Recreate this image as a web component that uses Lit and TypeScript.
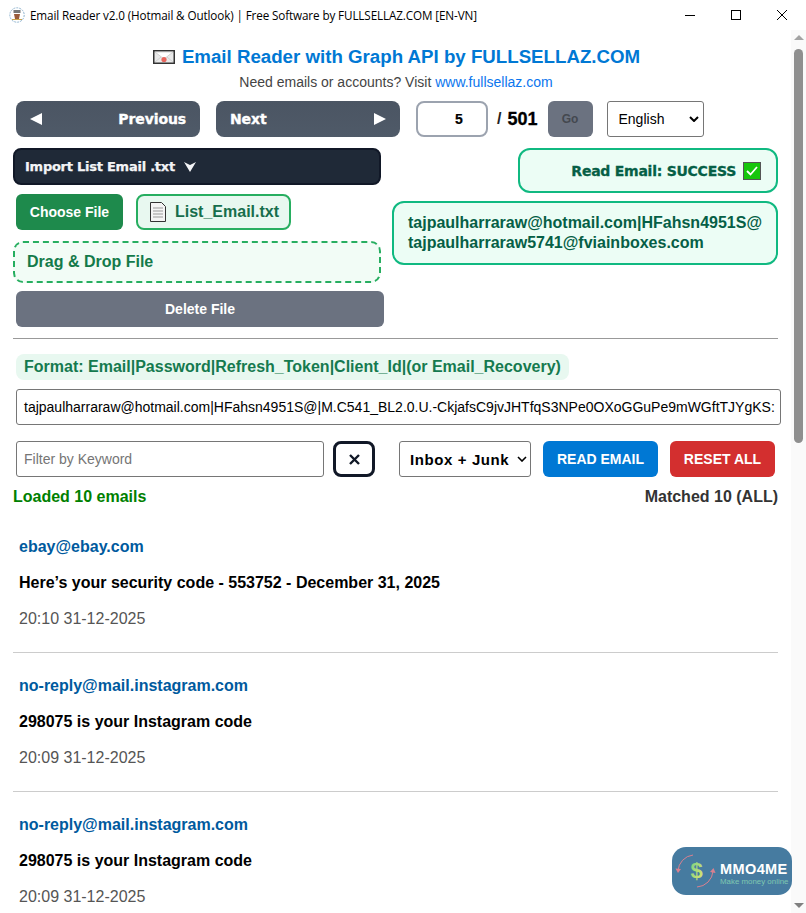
import { LitElement, html, css } from "lit";
import { customElement } from "lit/decorators.js";

const emails = [
  ["ebay@ebay.com", "Here’s your security code - 553752 - December 31, 2025", "20:10 31-12-2025"],
  ["no-reply@mail.instagram.com", "298075 is your Instagram code", "20:09 31-12-2025"],
  ["no-reply@mail.instagram.com", "298075 is your Instagram code", "20:09 31-12-2025"],
];

const star = "M0-2.6L.7-.8 2.6-.8 1.1.4 1.6 2.3 0 1.2-1.6 2.3-1.1.4-2.6-.8-.7-.8z";
const starPos = [[29, 7], [36, 11], [40, 17], [9, 30], [13, 37], [20, 40]];

@customElement("app-root")
export class AppRoot extends LitElement {
  static styles = css`
    :host { display: block; width: 806px; height: 913px; overflow: hidden; position: relative; background: #fff; font-family: "Liberation Sans", Arial, sans-serif; color: #000; }
    * { box-sizing: border-box; }
    .titlebar { height: 30px; display: flex; align-items: center; background: #fff; }
    .favicon { margin-left: 9px; width: 16px; height: 16px; }
    .wintitle { margin-left: 5px; font: 11.7px "Open Sans", "Noto Sans", sans-serif; color: #000; white-space: nowrap; flex: 1; letter-spacing: -0.12px; }
    .winbtns { display: flex; margin-right: 1px; }
    .winbtn { width: 46px; height: 30px; display: flex; align-items: center; justify-content: center; }
    .body { display: flex; height: 883px; }
    .page { width: 791px; height: 883px; overflow: hidden; flex: none; }
    .sb { width: 15px; flex: none; background: #fafafa; display: flex; flex-direction: column; align-items: center; padding-top: 5px; }
    .sb-up { width: 0; height: 0; border-left: 5px solid transparent; border-right: 5px solid transparent; border-bottom: 5px solid #a3a3a3; flex: none; }
    .sb-thumb { width: 9px; height: 394px; background: #8f8f8f; border-radius: 5px; margin-top: 9px; flex: none; }
    .sb-space { flex: 1; }
    .sb-down { width: 0; height: 0; border-left: 5px solid transparent; border-right: 5px solid transparent; border-top: 5px solid #808080; flex: none; margin-bottom: 5px; }
    h1 { margin: 0; height: 24px; margin-top: 15px; font-size: 18.7px; line-height: 24px; font-weight: 700; color: #0078d4; display: flex; justify-content: center; align-items: center; gap: 7px; padding-left: 2px; }
    .sub { text-align: center; font-size: 14px; line-height: 16px; margin-top: 5px; color: #444; padding-left: 1px; }
    .sub a { color: #0b76ee; text-decoration: none; }
    .nav { display: flex; align-items: center; margin: 11px 0 0 16px; height: 36px; }
    .navbtn { width: 184px; height: 36px; border-radius: 8px; background: linear-gradient(#4b5563, #4f5a68); color: #fff; display: flex; align-items: center; justify-content: space-between; padding: 0 14px; font: 700 14px "DejaVu Sans", sans-serif; -webkit-text-stroke: 0.35px #fff; letter-spacing: -0.1px; margin-right: 16px; }
    .navbtn svg { display: block; }
    .pageinp { width: 72px; height: 36px; border: 2px solid #9ca3af; border-radius: 8px; text-align: center; padding-left: 14px; font-size: 14px; font-weight: 700; line-height: 32px; background: #fff; -webkit-text-stroke: 0.2px #000; }
    .slash { font-size: 16px; font-weight: 700; margin-left: 9px; color: #222; }
    .total { font-size: 18px; font-weight: 700; margin-left: 6px; -webkit-text-stroke: 0.3px #000; }
    .go { width: 45px; height: 36px; margin-left: 10px; background: #6b7280; color: #44484f; border-radius: 6px; font-size: 12px; font-weight: 700; display: flex; align-items: center; justify-content: center; }
    .lang { width: 97px; height: 36px; margin-left: 14px; border: 1px solid #767676; border-radius: 3px; background: #fff; font-size: 14px; display: flex; align-items: center; justify-content: space-between; padding: 0 4px 0 11px; }
    .cols { display: flex; margin: 11px 0 0 13px; }
    .left { width: 371px; flex: none; display: flex; flex-direction: column; }
    .right { margin-left: 8px; width: 386px; flex: none; display: flex; flex-direction: column; align-items: flex-end; }
    .import { width: 368px; height: 37px; border: 2px solid #111827; border-radius: 8px; background: #1f2937; color: #f3f4f6; font: 700 13px "DejaVu Sans", sans-serif; -webkit-text-stroke: 0.25px #f3f4f6; letter-spacing: -0.25px; display: flex; align-items: center; padding-left: 10px; gap: 9px; }
    .filerow { display: flex; margin: 9px 0 0 3px; gap: 13px; }
    .choose { width: 107px; height: 36px; border-radius: 6px; background: #1e8a4c; color: #fff; font-size: 14px; font-weight: 700; display: flex; align-items: center; justify-content: center; }
    .chip { width: 155px; height: 36px; border-radius: 8px; border: 2px solid #27ae60; background: #e8f8f0; color: #166e4c; font-size: 16px; font-weight: 700; display: flex; align-items: center; padding-left: 12px; gap: 9px; }
    .drag { width: 368px; height: 42px; margin-top: 11px; border: 2px dashed #27ae60; border-radius: 10px; background: #f2fcf6; color: #147a4a; font-size: 16px; font-weight: 700; display: flex; align-items: center; padding-left: 12px; }
    .del { width: 368px; height: 36px; margin: 8px 0 0 3px; background: #6b7280; color: #fff; border-radius: 6px; font-size: 14px; font-weight: 700; display: flex; align-items: center; justify-content: center; }
    .status { width: 260px; height: 45px; border: 2px solid #10b981; border-radius: 12px; background: #ecfdf5; color: #065f46; font: 700 14px "DejaVu Sans", sans-serif; -webkit-text-stroke: 0.3px #065f46; letter-spacing: -0.25px; display: flex; align-items: center; justify-content: flex-end; padding-right: 15px; gap: 7px; }
    .check { width: 18px; height: 18px; background: #16c60c; border: 1px solid #555; display: flex; align-items: center; justify-content: center; }
    .info { width: 386px; height: 64px; margin-top: 8px; border: 2px solid #10b981; border-radius: 12px; background: #ecfdf5; color: #065f46; font-size: 16px; font-weight: 700; line-height: 20px; padding: 10px 14px; white-space: nowrap; }
    hr { margin: 11px 0 0 13px; width: 765px; border: 0; border-top: 1px solid #999; height: 1px; }
    .format { margin: 15px 0 0 16px; width: 553px; height: 26px; border-radius: 8px; background: #e8f8f0; color: #157a4f; font-size: 16px; font-weight: 700; display: flex; align-items: center; padding-left: 8px; white-space: nowrap; }
    .token { margin: 9px 0 0 16px; width: 765px; height: 36px; border: 1px solid #767676; border-radius: 3px; font-size: 14px; line-height: 34px; padding: 0 7px; white-space: nowrap; overflow: hidden; color: #000; }
    .filters { display: flex; margin: 16px 0 0 16px; height: 36px; }
    .kw { width: 308px; height: 36px; border: 1px solid #767676; border-radius: 3px; font-size: 14px; line-height: 34px; padding: 0 7px; color: #757575; }
    .xbtn { width: 42px; height: 36px; margin-left: 9px; border: 3px solid #111827; border-radius: 8px; display: flex; align-items: center; justify-content: center; }
    .box { width: 132px; height: 36px; margin-left: 24px; border: 1px solid #767676; border-radius: 3px; font-size: 15px; font-weight: 700; display: flex; align-items: center; justify-content: space-between; padding: 0 3px 0 10px; letter-spacing: 0.6px; }
    .read { width: 115px; height: 36px; margin-left: 12px; background: #0078d4; color: #fff; border-radius: 6px; font-size: 14px; font-weight: 700; display: flex; align-items: center; justify-content: center; }
    .reset { width: 105px; height: 36px; margin-left: 12px; background: #d32f2f; color: #fff; border-radius: 6px; font-size: 14px; font-weight: 700; display: flex; align-items: center; justify-content: center; }
    .counts { display: flex; justify-content: space-between; margin: 11px 0 0 13px; width: 765px; font-size: 16px; font-weight: 700; line-height: 18px; }
    .loaded { color: #008000; }
    .matched { color: #333; }
    .list { margin: 0 0 0 13px; width: 765px; padding-top: 8px; }
    .mail { height: 139px; border-bottom: 1px solid #ccc; padding: 24px 6px 0; }
    .mail:last-child { border-bottom: 0; }
    .from { font-size: 16px; font-weight: 700; color: #005a9e; line-height: 18px; }
    .subj { font-size: 16px; font-weight: 700; color: #000; line-height: 18px; margin-top: 18px; }
    .date { font-size: 16px; color: #555; line-height: 18px; margin-top: 18px; }
    .badge { position: absolute; left: 672px; top: 847px; width: 120px; height: 48px; }
  `;

  render() {
    return html`
      <div class="titlebar">
        <svg class="favicon" viewBox="0 0 16 16"><circle cx="8" cy="8" r="7.2" fill="#fff" stroke="#8fb4cf" stroke-width="1" stroke-dasharray="2 1"/><rect x="4.5" y="3" width="7" height="3" fill="#777"/><path d="M5 7h6l-1 5H6z" fill="#9a5b3a"/><path d="M3 12.5h10" stroke="#c9a24a"/></svg>
        <div class="wintitle">Email Reader v2.0 (Hotmail &amp; Outlook) | Free Software by FULLSELLAZ.COM [EN-VN]</div>
        <div class="winbtns">
          <div class="winbtn"><svg width="10" height="10"><path d="M0 5.5h10" stroke="#000"/></svg></div>
          <div class="winbtn"><svg width="10" height="10"><rect x=".5" y=".5" width="9" height="9" fill="none" stroke="#000"/></svg></div>
          <div class="winbtn"><svg width="10" height="10"><path d="M0 0l10 10M10 0L0 10" stroke="#000"/></svg></div>
        </div>
      </div>
      <div class="body">
        <div class="page">
          <h1>
            <svg width="22" height="14" viewBox="0 0 22 14"><rect x=".75" y=".75" width="20.5" height="12.5" fill="#e9e9e9" stroke="#333" stroke-width="1.5"/><path d="M2 2l9 7 9-7z" fill="#fff" stroke="#c4c4c4" stroke-width=".7"/><path d="M2 12l6-5M20 12l-6-5" stroke="#c4c4c4" stroke-width=".7"/><circle cx="11" cy="9.5" r="2.6" fill="#e8655c"/></svg>
            <span>Email Reader with Graph API by FULLSELLAZ.COM</span>
          </h1>
          <div class="sub">Need emails or accounts? Visit <a>www.fullsellaz.com</a></div>
          <div class="nav">
            <div class="navbtn"><svg width="12" height="12"><path d="M12 0v12L0 6z" fill="#fff"/></svg><span>Previous</span></div>
            <div class="navbtn"><span>Next</span><svg width="12" height="12"><path d="M0 0v12l12-6z" fill="#fff"/></svg></div>
            <div class="pageinp">5</div>
            <span class="slash">/</span><span class="total">501</span>
            <div class="go">Go</div>
            <div class="lang"><span>English</span><svg width="10" height="6"><path d="M1 1l4 4 4-4" fill="none" stroke="#000" stroke-width="2"/></svg></div>
          </div>
          <div class="cols">
            <div class="left">
              <div class="import"><span>Import List Email .txt</span><svg width="12" height="10"><path d="M0 0l6 3 6-3-6 10z" fill="#f3f4f6"/></svg></div>
              <div class="filerow">
                <div class="choose">Choose File</div>
                <div class="chip"><svg width="16" height="20" viewBox="0 0 16 20"><path d="M.5.5h11l4 4v15H.5z" fill="#f4f4f4" stroke="#333"/><path d="M3 6h10M3 9h10M3 12h10M3 15h10" stroke="#999"/></svg><span>List_Email.txt</span></div>
              </div>
              <div class="drag">Drag &amp; Drop File</div>
              <div class="del">Delete File</div>
            </div>
            <div class="right">
              <div class="status"><span>Read Email: SUCCESS</span><div class="check"><svg width="12" height="10"><path d="M1 5l3.5 3.5L11 1" fill="none" stroke="#fff" stroke-width="1.8"/></svg></div></div>
              <div class="info">tajpaulharraraw@hotmail.com|HFahsn4951S@<br>tajpaulharraraw5741@fviainboxes.com</div>
            </div>
          </div>
          <hr>
          <div class="format">Format: Email|Password|Refresh_Token|Client_Id|(or Email_Recovery)</div>
          <div class="token">tajpaulharraraw@hotmail.com|HFahsn4951S@|M.C541_BL2.0.U.-CkjafsC9jvJHTfqS3NPe0OXoGGuPe9mWGftTJYgKS:</div>
          <div class="filters">
            <div class="kw">Filter by Keyword</div>
            <div class="xbtn"><svg width="11" height="11"><path d="M1 1l9 9M10 1l-9 9" stroke="#111827" stroke-width="2.4"/></svg></div>
            <div class="box"><span>Inbox + Junk</span><svg width="10" height="6"><path d="M1 1l4 4 4-4" fill="none" stroke="#000" stroke-width="1.6"/></svg></div>
            <div class="read">READ EMAIL</div>
            <div class="reset">RESET ALL</div>
          </div>
          <div class="counts"><span class="loaded">Loaded 10 emails</span><span class="matched">Matched 10 (ALL)</span></div>
          <div class="list">
            ${emails.map(([f, s, d]) => html`<div class="mail"><div class="from">${f}</div><div class="subj">${s}</div><div class="date">${d}</div></div>`)}
          </div>
        </div>
        <div class="sb"><div class="sb-up"></div><div class="sb-thumb"></div><div class="sb-space"></div><div class="sb-down"></div></div>
      </div>
      <svg class="badge" viewBox="0 0 120 48">
        <defs><linearGradient id="dollar" x1="0" y1="0" x2="1" y2="1"><stop offset="0" stop-color="#6fd08a"/><stop offset="1" stop-color="#e6e66a"/></linearGradient></defs>
        <rect width="120" height="48" rx="14" fill="#467ba0"/>
        <path d="M6 24A17 17 0 0 1 21 8" fill="none" stroke="#d98090" stroke-width="1"/>
        <path d="M3.5 21.5L6 26l3-4z" fill="#d98090"/>
        <path d="M41 24A17 17 0 0 1 25 40" fill="none" stroke="#d98090" stroke-width="1"/>
        <path d="M38 25l3.5-4 2 5z" fill="#d98090"/>
        <text x="18.5" y="30.5" font-size="22" font-weight="700" font-family="Liberation Sans" fill="url(#dollar)">$</text>
        <g fill="#f3e36a">${starPos.map(([x, y]) => html`<path transform="translate(${x} ${y})" d="${star}"/>`)}</g>
        <text x="48" y="27" font-size="14.5" font-weight="700" font-family="Liberation Sans" fill="#fff" letter-spacing=".4">MMO4ME</text>
        <text x="48" y="37" font-size="7.9" font-family="Liberation Sans" fill="#7fc7b0">Make money online</text>
      </svg>
    `;
  }
}
